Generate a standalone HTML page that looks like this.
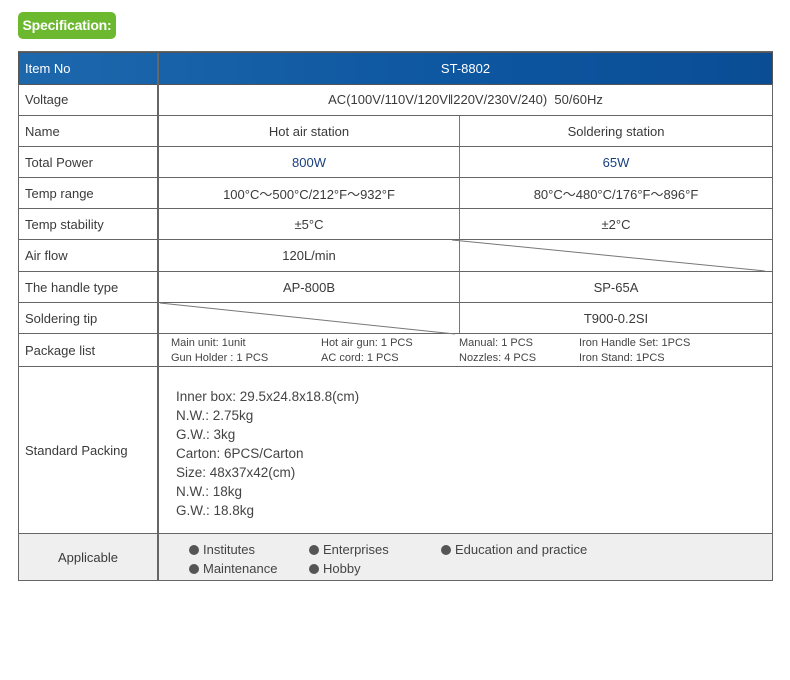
<!DOCTYPE html>
<html><head><meta charset="utf-8"><style>
body{margin:0;width:790px;height:680px;background:#fff;position:relative;font-family:"Liberation Sans",sans-serif;color:#3a3a3a;overflow:hidden}
.a{position:absolute}
.badge{left:18px;top:12px;width:98px;height:27px;background:#6cb82f;border-radius:5px;color:#fff;font-weight:bold;font-size:14px;line-height:27px;text-align:center;font-family:"Liberation Sans Narrow","Liberation Sans",sans-serif;letter-spacing:-0.2px}
.r{position:absolute;left:18px;width:753px;border:1px solid #666;border-top:none;box-sizing:content-box}
.c{position:absolute;top:0;bottom:0;display:flex;align-items:center;font-size:13px}
.l{left:0;padding-left:6px;border-right:2px solid #666;box-sizing:border-box;width:140px}
.m{left:140px;right:0;justify-content:center}
.h1{left:140px;width:300px;justify-content:center;border-right:1px solid #777}
.h2{left:441px;right:0;justify-content:center}
.blue{color:#1a3f7f}
.pk{position:absolute;font-size:11px;color:#444}
.b{display:inline-block;width:10px;height:10px;border-radius:50%;background:#555;margin-right:4px;vertical-align:-1px}
</style></head><body>
<div class="a badge">Specification:</div>
<div class="a" style="left:18px;top:51px;width:755px;height:530px;border:1px solid #666;box-sizing:border-box"></div>
<div class="r" style="top:52px;height:31px;background:linear-gradient(90deg,#1d68ad,#0d56a0 60%,#0a4d95);border:1px solid #555;color:#fff">
<div class="c l" style="color:#fff">Item No</div><div class="c m" style="color:#fff">ST-8802</div></div>
<div class="r" style="top:84px;height:31px"><div class="c l">Voltage</div><div class="c m">AC(100V/110V/120V‖220V/230V/240) &nbsp;50/60Hz</div></div>
<div class="r" style="top:116px;height:30px"><div class="c l">Name</div><div class="c h1">Hot air station</div><div class="c h2">Soldering station</div></div>
<div class="r" style="top:147px;height:30px"><div class="c l">Total Power</div><div class="c h1 blue">800W</div><div class="c h2 blue">65W</div></div>
<div class="r" style="top:178px;height:30px"><div class="c l">Temp range</div><div class="c h1">100°C～500°C/212°F～932°F</div><div class="c h2">80°C～480°C/176°F～896°F</div></div>
<div class="r" style="top:209px;height:30px"><div class="c l">Temp stability</div><div class="c h1">±5°C</div><div class="c h2">±2°C</div></div>
<div class="r" style="top:240px;height:31px"><div class="c l">Air flow</div><div class="c h1">120L/min</div><div class="c h2"></div></div>
<div class="r" style="top:272px;height:30px"><div class="c l">The handle type</div><div class="c h1">AP-800B</div><div class="c h2">SP-65A</div></div>
<div class="r" style="top:303px;height:30px"><div class="c l">Soldering tip</div><div class="c h1"></div><div class="c h2">T900-0.2SI</div></div>
<div class="r" style="top:334px;height:32px"><div class="c l">Package list</div></div>
<div class="pk" style="left:171px;top:337px">Main unit: 1unit</div>
<div class="pk" style="left:321px;top:337px">Hot air gun: 1 PCS</div>
<div class="pk" style="left:459px;top:337px">Manual: 1 PCS</div>
<div class="pk" style="left:579px;top:337px">Iron Handle Set: 1PCS</div>
<div class="pk" style="left:171px;top:352px">Gun Holder : 1 PCS</div>
<div class="pk" style="left:321px;top:352px">AC cord: 1 PCS</div>
<div class="pk" style="left:459px;top:352px">Nozzles: 4 PCS</div>
<div class="pk" style="left:579px;top:352px">Iron Stand: 1PCS</div>
<div class="r" style="top:367px;height:166px"><div class="c l">Standard Packing</div></div>
<div class="a" style="left:176px;top:387px;font-size:13.5px;line-height:19px;color:#444">Inner box: 29.5x24.8x18.8(cm)<br>N.W.: 2.75kg<br>G.W.: 3kg<br>Carton: 6PCS/Carton<br>Size: 48x37x42(cm)<br>N.W.: 18kg<br>G.W.: 18.8kg</div>
<div class="r" style="top:534px;height:46px;background:#efefef"><div class="c l" style="justify-content:center;padding:0">Applicable</div></div>
<div class="a" style="left:189px;top:540px;font-size:13px;line-height:19px;color:#444">
<div class="a" style="left:0;white-space:nowrap"><span class="b"></span>Institutes</div>
<div class="a" style="left:120px;white-space:nowrap"><span class="b"></span>Enterprises</div>
<div class="a" style="left:252px;white-space:nowrap"><span class="b"></span>Education and practice</div>
<div class="a" style="left:0;top:19px;white-space:nowrap"><span class="b"></span>Maintenance</div>
<div class="a" style="left:120px;top:19px;white-space:nowrap"><span class="b"></span>Hobby</div>
</div>
<svg class="a" style="left:0;top:0" width="790" height="680"><line x1="452" y1="240" x2="765" y2="271" stroke="#777" stroke-width="1"/><line x1="160" y1="303" x2="455" y2="334" stroke="#777" stroke-width="1"/></svg>
</body></html>
